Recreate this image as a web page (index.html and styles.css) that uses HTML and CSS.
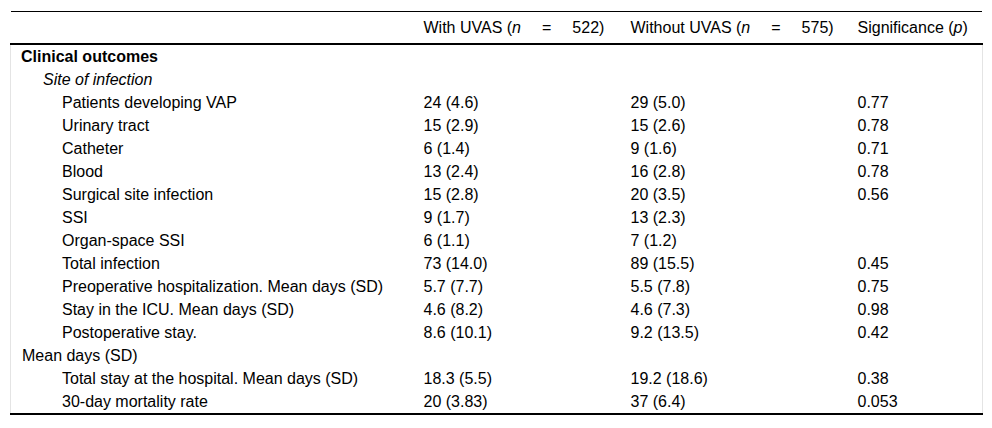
FILE: index.html
```html
<!DOCTYPE html>
<html>
<head>
<meta charset="utf-8">
<link rel="stylesheet" href="styles.css">
</head>
<body>
<div class="wrap">
<table class="tbl">
<colgroup>
<col class="w1"><col class="w2"><col class="w3"><col class="w4">
</colgroup>
<thead>
<tr>
<th class="first"></th>
<th>With UVAS (<i>n</i><span class="eq">=</span>522)</th>
<th>Without UVAS (<i>n</i><span class="eq">=</span>575)</th>
<th class="last">Significance (<i>p</i>)</th>
</tr>
</thead>
<tbody>
<tr><td><b>Clinical outcomes</b></td><td></td><td></td><td></td></tr>
<tr><td><span class="l1"><i>Site of infection</i></span></td><td></td><td></td><td></td></tr>
<tr><td><span class="l2">Patients developing VAP</span></td><td>24 (4.6)</td><td>29 (5.0)</td><td>0.77</td></tr>
<tr><td><span class="l2">Urinary tract</span></td><td>15 (2.9)</td><td>15 (2.6)</td><td>0.78</td></tr>
<tr><td><span class="l2">Catheter</span></td><td>6 (1.4)</td><td>9 (1.6)</td><td>0.71</td></tr>
<tr><td><span class="l2">Blood</span></td><td>13 (2.4)</td><td>16 (2.8)</td><td>0.78</td></tr>
<tr><td><span class="l2">Surgical site infection</span></td><td>15 (2.8)</td><td>20 (3.5)</td><td>0.56</td></tr>
<tr><td><span class="l2">SSI</span></td><td>9 (1.7)</td><td>13 (2.3)</td><td></td></tr>
<tr><td><span class="l2">Organ-space SSI</span></td><td>6 (1.1)</td><td>7 (1.2)</td><td></td></tr>
<tr><td><span class="l2">Total infection</span></td><td>73 (14.0)</td><td>89 (15.5)</td><td>0.45</td></tr>
<tr><td><span class="l2">Preoperative hospitalization. Mean days (SD)</span></td><td>5.7 (7.7)</td><td>5.5 (7.8)</td><td>0.75</td></tr>
<tr><td><span class="l2">Stay in the ICU. Mean days (SD)</span></td><td>4.6 (8.2)</td><td>4.6 (7.3)</td><td>0.98</td></tr>
<tr><td><span class="l2">Postoperative stay.</span></td><td>8.6 (10.1)</td><td>9.2 (13.5)</td><td>0.42</td></tr>
<tr><td><span class="l0">Mean days (SD)</span></td><td></td><td></td><td></td></tr>
<tr><td><span class="l2">Total stay at the hospital. Mean days (SD)</span></td><td>18.3 (5.5)</td><td>19.2 (18.6)</td><td>0.38</td></tr>
<tr><td><span class="l2">30-day mortality rate</span></td><td>20 (3.83)</td><td>37 (6.4)</td><td>0.053</td></tr>
</tbody>
</table>
</div>
</body>
</html>
```

FILE: styles.css
```css
html, body {
  margin: 0;
  padding: 0;
  background: #fff;
}
.wrap {
  padding: 11px 10px 0 10px;
}
.tbl {
  width: 972px;
  table-layout: fixed;
  border-collapse: collapse;
  font-family: "Liberation Sans", Arial, sans-serif;
  font-size: 16px;
  color: #000;
  border-top: 1px solid #000;
  border-bottom: 2px solid #000;
  border-left: 1px solid #e4e4e4;
  border-right: 1px solid #e4e4e4;
}
.w1 { width: 403px; }
.w2 { width: 207px; }
.w3 { width: 227px; }
.w4 { width: 135px; }
.tbl thead tr {
  border-bottom: 2px solid #000;
}
.tbl th {
  font-weight: normal;
  text-align: left;
  height: 31px;
  padding: 0 10px;
  vertical-align: middle;
  white-space: nowrap;
  background: #fff;
}
.tbl th.first {
  border-left: 1px solid #fff;
}
.tbl th.last {
  border-right: 1px solid #fff;
}
.tbl td {
  height: 23px;
  padding: 0 10px;
  line-height: 18px;
  vertical-align: middle;
  white-space: nowrap;
}
.eq {
  padding: 0 21px;
}
.l0 { margin-left: 1px; }
.l1 { margin-left: 22px; }
.l2 { margin-left: 41px; }
```
